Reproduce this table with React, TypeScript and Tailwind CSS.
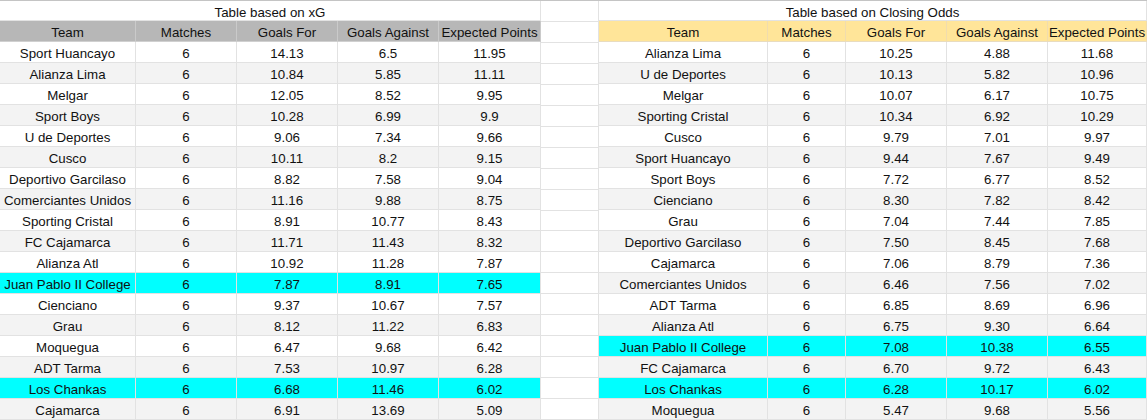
const xgRows: [string, string, string, string, string][] = [
  ["Sport Huancayo", "6", "14.13", "6.5", "11.95"],
  ["Alianza Lima", "6", "10.84", "5.85", "11.11"],
  ["Melgar", "6", "12.05", "8.52", "9.95"],
  ["Sport Boys", "6", "10.28", "6.99", "9.9"],
  ["U de Deportes", "6", "9.06", "7.34", "9.66"],
  ["Cusco", "6", "10.11", "8.2", "9.15"],
  ["Deportivo Garcilaso", "6", "8.82", "7.58", "9.04"],
  ["Comerciantes Unidos", "6", "11.16", "9.88", "8.75"],
  ["Sporting Cristal", "6", "8.91", "10.77", "8.43"],
  ["FC Cajamarca", "6", "11.71", "11.43", "8.32"],
  ["Alianza Atl", "6", "10.92", "11.28", "7.87"],
  ["Juan Pablo II College", "6", "7.87", "8.91", "7.65"],
  ["Cienciano", "6", "9.37", "10.67", "7.57"],
  ["Grau", "6", "8.12", "11.22", "6.83"],
  ["Moquegua", "6", "6.47", "9.68", "6.42"],
  ["ADT Tarma", "6", "7.53", "10.97", "6.28"],
  ["Los Chankas", "6", "6.68", "11.46", "6.02"],
  ["Cajamarca", "6", "6.91", "13.69", "5.09"],
];

const oddsRows: [string, string, string, string, string][] = [
  ["Alianza Lima", "6", "10.25", "4.88", "11.68"],
  ["U de Deportes", "6", "10.13", "5.82", "10.96"],
  ["Melgar", "6", "10.07", "6.17", "10.75"],
  ["Sporting Cristal", "6", "10.34", "6.92", "10.29"],
  ["Cusco", "6", "9.79", "7.01", "9.97"],
  ["Sport Huancayo", "6", "9.44", "7.67", "9.49"],
  ["Sport Boys", "6", "7.72", "6.77", "8.52"],
  ["Cienciano", "6", "8.30", "7.82", "8.42"],
  ["Grau", "6", "7.04", "7.44", "7.85"],
  ["Deportivo Garcilaso", "6", "7.50", "8.45", "7.68"],
  ["Cajamarca", "6", "7.06", "8.79", "7.36"],
  ["Comerciantes Unidos", "6", "6.46", "7.56", "7.02"],
  ["ADT Tarma", "6", "6.85", "8.69", "6.96"],
  ["Alianza Atl", "6", "6.75", "9.30", "6.64"],
  ["Juan Pablo II College", "6", "7.08", "10.38", "6.55"],
  ["FC Cajamarca", "6", "6.70", "9.72", "6.43"],
  ["Los Chankas", "6", "6.28", "10.17", "6.02"],
  ["Moquegua", "6", "5.47", "9.68", "5.56"],
];

const highlighted = ["Juan Pablo II College", "Los Chankas"];
const headers = ["Team", "Matches", "Goals For", "Goals Against", "Expected Points"];

// sheet cells sit text a little low, like Google Sheets bottom alignment
const cell =
  "flex h-[21px] items-center justify-center pt-[4px] border-r border-b border-[#e2e2e2] whitespace-nowrap overflow-hidden";

function rowBg(team: string, i: number) {
  if (highlighted.includes(team)) return "bg-[#00ffff]";
  return i % 2 === 1 ? "bg-[#f3f3f3]" : "bg-white";
}

function SheetTable({
  title,
  rows,
  widths,
  headerBg,
  headerBorder,
}: {
  title: string;
  rows: [string, string, string, string, string][];
  widths: string[];
  headerBg: string;
  headerBorder: string;
}) {
  return (
    <div className="flex flex-col">
      <div className={`${cell} bg-white`}>{title}</div>
      <div className="flex">
        {headers.map((h, j) => (
          <div key={h} className={`${cell} ${widths[j]} ${headerBg} ${headerBorder}`}>
            {h}
          </div>
        ))}
      </div>
      {rows.map((r, i) => (
        <div key={r[0]} className={`flex ${rowBg(r[0], i)}`}>
          {r.map((v, j) => (
            <div key={j} className={`${cell} ${widths[j]}`}>
              {v}
            </div>
          ))}
        </div>
      ))}
    </div>
  );
}

export default function App() {
  return (
    <div
      className="flex w-[1147px] h-[420px] overflow-hidden bg-white border-t border-[#c4c4c4] text-[13.3px] text-[#111]"
      style={{ fontFamily: '"Liberation Sans", Arial, sans-serif' }}
    >
      <SheetTable
        title="Table based on xG"
        rows={xgRows}
        widths={["w-[136px]", "w-[101px]", "w-[101px]", "w-[101px]", "w-[102px]"]}
        headerBg="bg-[#b7b7b7]"
        headerBorder="border-r-[#cacaca] border-b-[#d0d0d0]"
      />
      {/* spacer column */}
      <div className="flex flex-col w-[58px]">
        {Array.from({ length: 20 }).map((_, i) => (
          <div key={i} className={`${cell} bg-white`} />
        ))}
      </div>
      <SheetTable
        title="Table based on Closing Odds"
        rows={oddsRows}
        widths={["w-[169px]", "w-[78px]", "w-[101px]", "w-[101px]", "w-[99px]"]}
        headerBg="bg-[#ffe599]"
        headerBorder="border-r-[#f0dcae] border-b-[#e8dcc0]"
      />
    </div>
  );
}
